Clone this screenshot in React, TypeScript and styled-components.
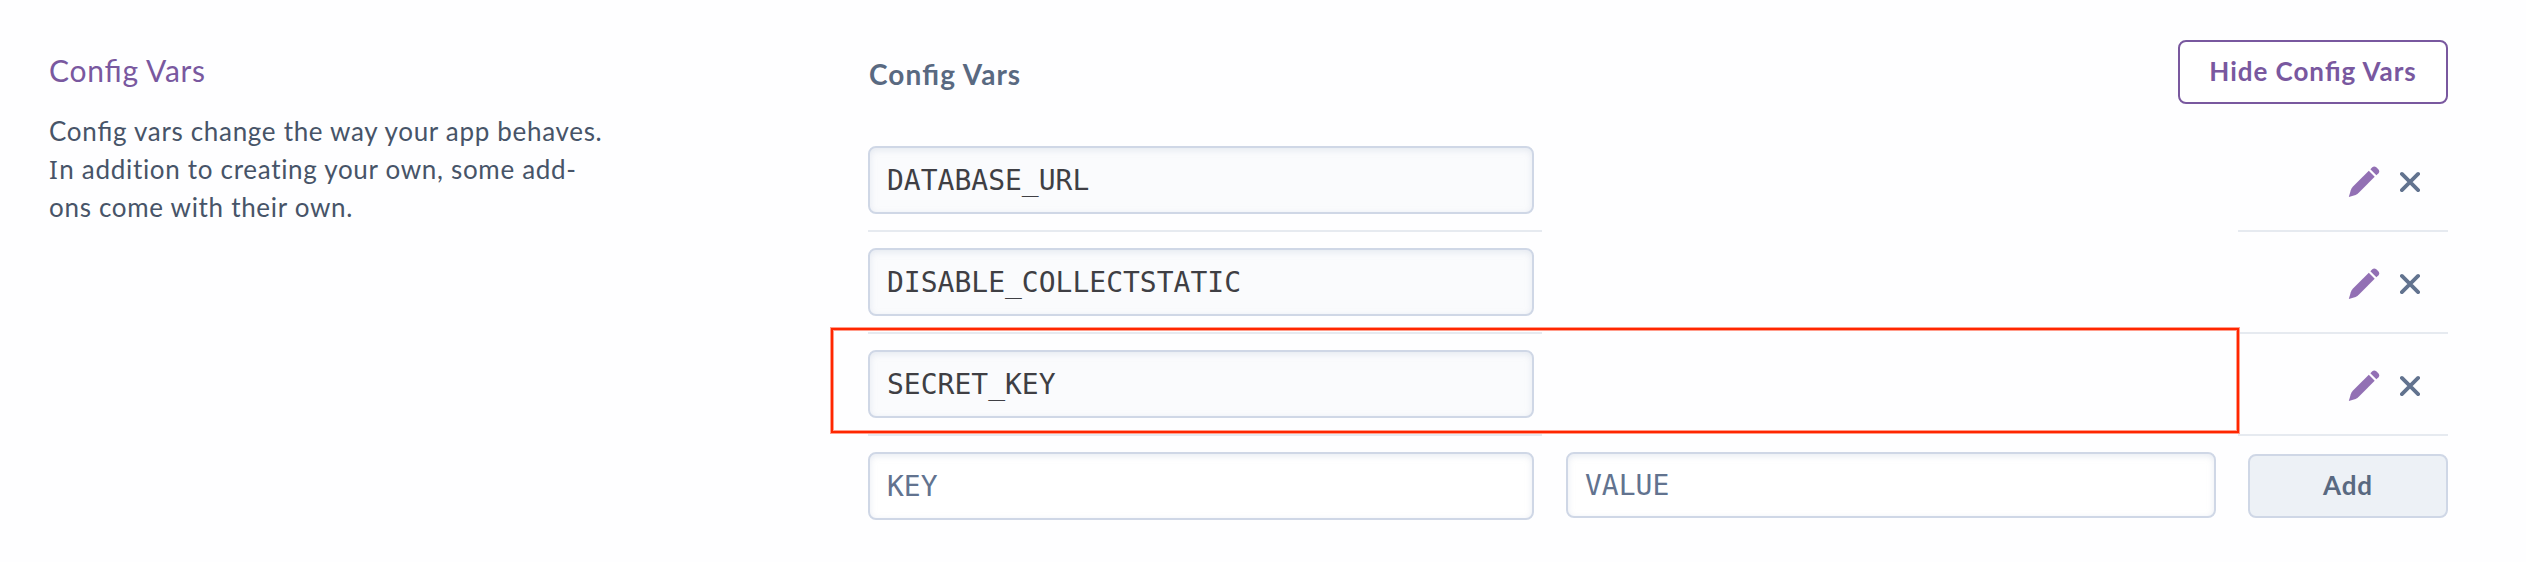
import React from 'react';
import styled, { createGlobalStyle } from 'styled-components';

const GlobalStyle = createGlobalStyle`
  * { box-sizing: border-box; }
  body {
    margin: 0;
    background: #fefeff;
    font-family: Lato, 'Noto Sans', sans-serif;
  }
`;

const Page = styled.main`
  display: flex;
  width: 2526px;
  height: 562px;
  padding: 40px 78px 0 49px;
`;

const Intro = styled.section`
  width: 819px;
  padding-top: 11px;
`;

const IntroTitle = styled.h2`
  margin: 0;
  font-size: 30px;
  line-height: 38px;
  font-weight: 400;
  letter-spacing: 0.7px;
  color: #79589f;
`;

const IntroText = styled.p`
  margin: 23px 0 0;
  width: 590px;
  font-size: 26px;
  line-height: 38px;
  letter-spacing: 0.69px;
  color: #475468;
`;

const Ligature = styled.span`
  font-feature-settings: 'liga' 1;
`;

const SerifCap = styled.span`
  font-family: 'Noto Sans', sans-serif;
  line-height: 0;
  letter-spacing: 1.5px;
`;

const Panel = styled.section`
  flex: 1;
  min-width: 0;
`;

const PanelHeader = styled.header`
  display: flex;
  justify-content: space-between;
  height: 106px;
`;

const PanelTitle = styled.h3`
  margin: 14px 0 0 1px;
  font-size: 28px;
  line-height: 40px;
  font-weight: 700;
  letter-spacing: 1.05px;
  color: #596981;
`;

const Button = styled.button<{ $variant: 'outline' | 'muted' }>`
  width: ${(p) => (p.$variant === 'outline' ? 270 : 200)}px;
  height: 64px;
  padding: 0 0 3px;
  border: 2px solid ${(p) => (p.$variant === 'outline' ? '#79589f' : '#cfd7e6')};
  border-radius: 8px;
  background: ${(p) => (p.$variant === 'outline' ? '#fff' : '#edf1f6')};
  color: ${(p) => (p.$variant === 'outline' ? '#79589f' : '#596981')};
  font: 700 26px Lato, 'Noto Sans', sans-serif;
  letter-spacing: 0.95px;
  white-space: nowrap;
`;

const Row = styled.div`
  position: relative;
  display: flex;
  justify-content: space-between;
  height: 102px;
`;

const KeyCell = styled.div`
  width: 674px;
  height: 86px;
  border-bottom: 2px solid #e6eaf0;
`;

const ActionCell = styled.div`
  display: flex;
  align-items: flex-start;
  justify-content: flex-end;
  gap: 20px;
  width: 210px;
  height: 86px;
  padding: 20px 28px 0 0;
  border-bottom: 2px solid #e6eaf0;
`;

const Field = styled.input<{ $height?: number; $width?: number }>`
  display: block;
  width: ${(p) => p.$width ?? 666}px;
  height: ${(p) => p.$height ?? 68}px;
  padding: 0 17px;
  border: 2px solid #cfd7e6;
  border-radius: 8px;
  outline: 0;
  background: ${(p) => (p.readOnly ? '#fafbfd' : '#fff')};
  box-shadow: inset 0 2px 6px rgba(207, 215, 230, 0.5);
  font: 28px 'DejaVu Sans Mono', monospace;
  color: #3f3f44;
  &::placeholder { color: #62738f; opacity: 1; }
`;

const NewRow = styled.div`
  display: flex;
  align-items: flex-start;
  gap: 32px;
`;

const AddSlot = styled.div`
  padding-top: 2px;
`;

const Highlight = styled.div`
  position: absolute;
  left: -37px;
  top: -22px;
  width: 1408px;
  height: 105px;
  border: 2px solid #ff2600;
  box-shadow: 0 0 0 1px #ff9d8c, inset 0 0 0 1px #ff9d8c;
  pointer-events: none;
`;

const PencilIcon = () => (
  <svg width="32" height="32" viewBox="0 0 32 32">
    <path d="M.8 31 2.8 24.2Q3.4 22.2 5 20.5L20.8 4.8l5.9 5.9L11 26.6q-1.6 1.6-3.4 2.3Z" fill="#9270b4" />
    <path d="m22.4 3.2 1.9-2Q26.2-.2 28.3 1.2l2 2Q32 5.3 30.5 7.3l-2.1 2Z" fill="#9270b4" />
  </svg>
);

const CloseIcon = () => (
  <svg width="20" height="32" viewBox="0 0 20 32">
    <path d="m1.9 7.9 16.2 16.2M18.1 7.9 1.9 24.1" stroke="#62738f" strokeWidth="3.8" strokeLinecap="round" />
  </svg>
);

const ConfigWord = () => (
  <>Con<Ligature>fi</Ligature>g</>
);

const vars = [
  { name: 'DATABASE_URL' },
  { name: 'DISABLE_COLLECTSTATIC' },
  { name: 'SECRET_KEY', highlighted: true },
];

export default function App() {
  return (
    <>
      <GlobalStyle />
      <Page>
        <Intro>
          <IntroTitle><ConfigWord /> Vars</IntroTitle>
          <IntroText>
            <ConfigWord /> vars change the way your app behaves.<br />
            <SerifCap>I</SerifCap>n addition to creating your own, some add-<br />
            ons come with their own.
          </IntroText>
        </Intro>
        <Panel>
          <PanelHeader>
            <PanelTitle><ConfigWord /> Vars</PanelTitle>
            <Button $variant="outline">Hide <ConfigWord /> Vars</Button>
          </PanelHeader>
          {vars.map((v) => (
            <Row key={v.name}>
              <KeyCell>
                <Field readOnly value={v.name} />
              </KeyCell>
              <ActionCell>
                <PencilIcon />
                <CloseIcon />
              </ActionCell>
              {v.highlighted && <Highlight />}
            </Row>
          ))}
          <NewRow>
            <Field placeholder="KEY" />
            <Field placeholder="VALUE" $width={650} $height={66} />
            <AddSlot>
              <Button $variant="muted">Add</Button>
            </AddSlot>
          </NewRow>
        </Panel>
      </Page>
    </>
  );
}
